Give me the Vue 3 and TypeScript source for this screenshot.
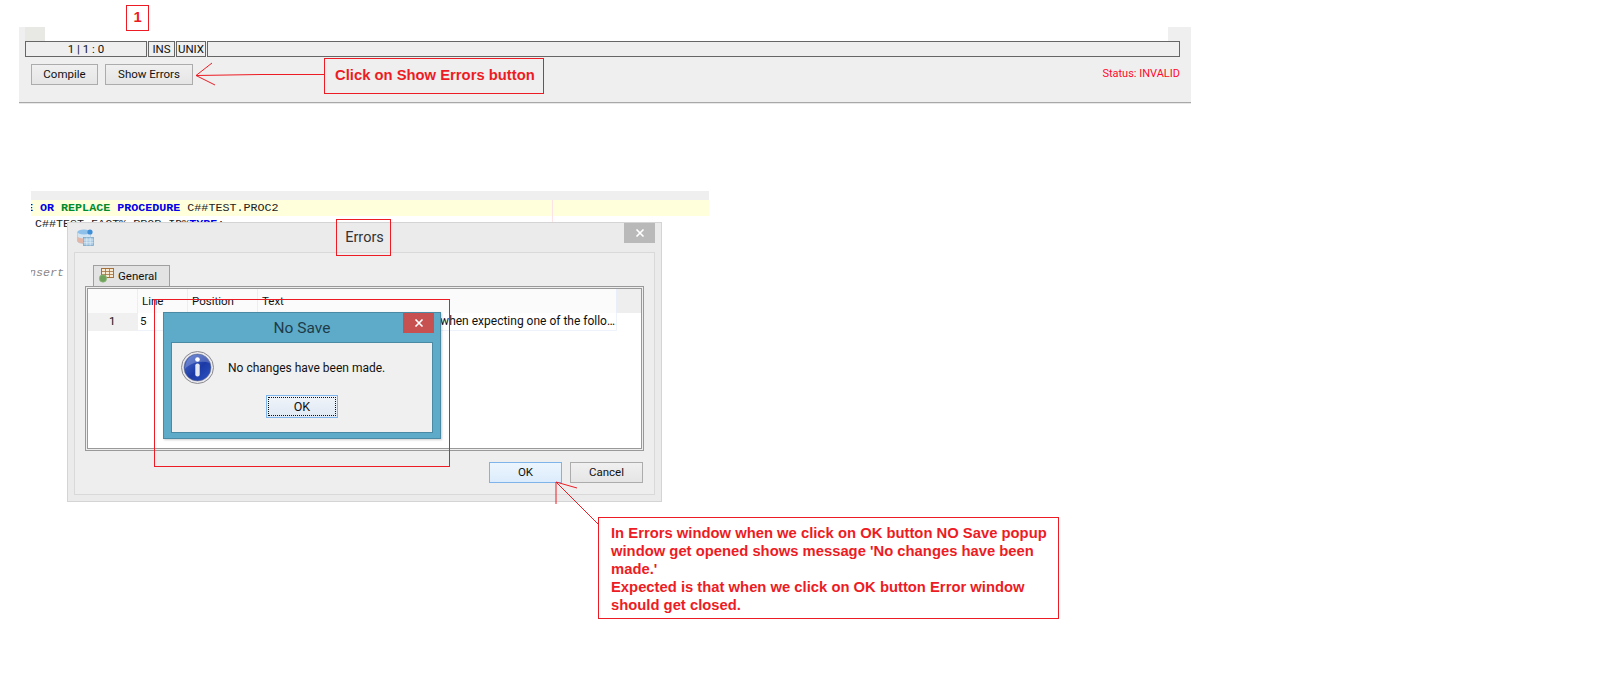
<script setup lang="ts">
const statusCells = [
  { label: '1 | 1 : 0', width: 122 },
  { label: 'INS', width: 27 },
  { label: 'UNIX', width: 30 }
]

const columns = [
  { label: '', width: 50 },
  { label: 'Line', width: 50 },
  { label: 'Position', width: 70 },
  { label: 'Text', width: 359 }
]

const calloutLines = [
  'In Errors window when we click on OK button NO Save popup',
  "window get opened shows message 'No changes have been",
  "made.'",
  'Expected is that when we click on OK button Error window',
  'should get closed.'
]
</script>

<template>
  <div class="page">
    <!-- top editor footer -->
    <section class="panel">
      <div class="panel-top">
        <span class="notch"></span>
        <span class="blank"></span>
      </div>
      <div class="status-row">
        <span
          v-for="cell in statusCells"
          :key="cell.label"
          class="status-cell"
          :style="{ width: cell.width + 'px' }"
        >{{ cell.label }}</span>
        <span class="status-cell grow"></span>
      </div>
      <div class="action-row">
        <button class="btn compile">Compile</button>
        <button class="btn show-errors">Show Errors</button>
        <span class="status-text">Status: INVALID</span>
      </div>
    </section>

    <!-- code behind the dialog -->
    <section class="editor">
      <div class="gutter"></div>
      <div class="code-line current">
        <span class="kw clip">E</span> <span class="kw">OR</span> <span class="kw2">REPLACE</span> <span class="kw">PROCEDURE</span> C##TEST.PROC2
        <i class="margin-line"></i>
      </div>
      <div class="code-line second">C##TEST.FACT%.PROP_ID%<span class="kw">TYPE</span>;</div>
      <div class="code-line comment">nsert</div>
    </section>

    <!-- Errors dialog -->
    <section class="errors">
      <header class="errors-head">
        <svg class="db-icon" width="17" height="17" viewBox="0 0 17 17">
          <path d="M.5 3v9c0 1.400 3 2.500 6.500 2.500s6.500-1.100 6.500-2.500V3z" fill="#d3e4f2" stroke="#a9c4dc" stroke-width=".6" />
          <ellipse cx="7" cy="3" rx="6.500" ry="2.500" fill="#8fc0ea" />
          <path d="M.5 7c0 1.400 3 2.500 6.500 2.500v5c-3.500 0-6.500-1.100-6.500-2.500z" fill="#e8a488" opacity=".7" />
          <circle cx="13" cy="3" r="2.600" fill="#3f8fd8" />
          <rect x="6.500" y="8.500" width="10" height="8" fill="#a9cbe4" stroke="#7da7c7" stroke-width=".8" />
          <path d="M6.500 11h10M6.500 13.700h10M9.800 8.500v8M13.200 8.500v8" stroke="#e2eff8" stroke-width=".7" />
        </svg>
        <span class="errors-title">Errors</span>
        <span class="close grey">
          <svg width="10" height="8" viewBox="0 0 10 8"><path d="M1.500.5l7 7M8.500.5l-7 7" stroke="#fff" stroke-width="1.600" /></svg>
        </span>
      </header>
      <div class="errors-body">
        <div class="tab">
          <svg width="15" height="15" viewBox="0 0 15 15">
            <rect x="2.500" y=".5" width="12" height="9" fill="#f6ead2" stroke="#a5703c" />
            <path d="M2.500 3.500h12M2.500 6.500h12M6.500.5v9M10.500.5v9" stroke="#a5703c" stroke-width=".8" />
            <circle cx="4" cy="10.500" r="3.700" fill="#6fa35c" stroke="#8fbb7e" stroke-width=".7" />
          </svg>
          General
        </div>
        <div class="frame">
          <div class="grid">
            <div class="head">
              <span
                v-for="col in columns"
                :key="col.label"
                class="head-cell"
                :style="{ width: col.width + 'px' }"
              >{{ col.label }}</span>
            </div>
            <div class="row">
              <span class="row-no">1</span>
              <span class="cell line-cell">5</span>
              <span class="cell pos-cell"></span>
              <span class="cell text-cell">/" when expecting one of the follo…</span>
            </div>
          </div>
        </div>
        <div class="errors-foot">
          <button class="btn ok">OK</button>
          <button class="btn cancel">Cancel</button>
        </div>
      </div>
    </section>

    <!-- No Save popup -->
    <section class="nosave">
      <header class="nosave-head">
        <span>No Save</span>
        <span class="close red">
          <svg width="10" height="8" viewBox="0 0 10 8"><path d="M1.500.5l7 7M8.500.5l-7 7" stroke="#fff" stroke-width="1.600" /></svg>
        </span>
      </header>
      <div class="nosave-body">
        <div class="msg">
          <svg width="33" height="33" viewBox="0 0 33 33">
            <defs>
              <linearGradient id="infoFill" x1="0" y1="0" x2="1" y2="1">
                <stop offset="0" stop-color="#4c6fd0" />
                <stop offset=".55" stop-color="#1c3aa6" />
                <stop offset="1" stop-color="#2b55c4" />
              </linearGradient>
            </defs>
            <circle cx="16.500" cy="16.500" r="16" fill="#e8e8ee" stroke="#8a8a90" />
            <circle cx="16.500" cy="16.500" r="13.500" fill="url(#infoFill)" stroke="#6d7488" stroke-width=".6" />
            <path d="M4 18C9 12 20 9 29 12 27 6 22 3.500 16.500 3.500 9.500 3.500 4 9.500 4 18z" fill="#fff" opacity=".22" />
            <circle cx="16.500" cy="8.500" r="2.300" fill="#fff" />
            <rect x="14.300" y="12.500" width="4.400" height="13" rx="2" fill="#e4e8f2" />
          </svg>
          <span>No changes have been made.</span>
        </div>
        <button class="btn popup-ok"><span>OK</span></button>
      </div>
    </section>

    <!-- red annotations -->
    <div class="note num">1</div>
    <div class="note click-note">Click on Show Errors button</div>
    <div class="note errors-note"></div>
    <div class="note popup-note"></div>
    <div class="note callout">
      <div v-for="line in calloutLines" :key="line">{{ line }}</div>
    </div>
    <svg class="arrows" width="1602" height="695" viewBox="0 0 1602 695">
      <g fill="none" stroke="#ed1c24" stroke-width="1">
        <path d="M324 74.500H261L196 75.500" />
        <path d="M196 75.500L212 63M196 75.500L215 85" />
        <path d="M556 482V504M556 482L577 488M556 482L599 525" />
      </g>
    </svg>
  </div>
</template>

<style scoped>
.page {
  position: relative;
  width: 1602px;
  height: 695px;
  overflow: hidden;
  background: #fff;
  font-family: Roboto, "Noto Sans", sans-serif;
  font-size: 11.5px;
  color: #111;
}

.panel {
  width: 1172px;
  height: 75px;
  margin: 27px 0 0 19px;
  background: #efefef;
  border-bottom: 1px solid #a8a8a8;
  box-shadow: 0 1px 0 #e8e8e8;
  box-sizing: content-box;
}

.panel-top {
  display: flex;
  height: 14px;
  padding-left: 6px;
}

.notch {
  width: 20px;
  background: #e8e8e4;
}

.blank {
  width: 1123px;
  background: #fff;
}

.status-row {
  display: flex;
  gap: 1px;
  height: 16px;
  margin-left: 6px;
  width: 1155px;
}

.status-cell {
  box-sizing: border-box;
  display: flex;
  align-items: center;
  justify-content: center;
  border: 1px solid #666;
}

.grow {
  flex: 1;
}

.action-row {
  display: flex;
  align-items: center;
  height: 21px;
  margin-top: 7px;
  padding: 0 11px 0 12px;
}

.btn {
  box-sizing: border-box;
  padding: 0 0 1px;
  height: 21px;
  border: 1px solid #acacac;
  background: linear-gradient(#f0f0f0, #e5e5e5);
  font: inherit;
  color: #111;
}

.compile {
  width: 67px;
}

.show-errors {
  width: 88px;
  margin-left: 7px;
}

.status-text {
  margin-left: auto;
  padding-bottom: 2px;
  font-size: 11px;
  color: #ff0a2a;
}

.editor {
  width: 678px;
  margin: 88px 0 0 31px;
  overflow: hidden;
  font-family: "Liberation Mono", monospace;
  font-size: 11.7px;
  color: #222;
}

.gutter {
  height: 9px;
  background: #efefef;
}

.code-line {
  height: 16px;
  line-height: 16px;
  white-space: pre;
}

.current {
  position: relative;
  background: #ffffdc;
}

.margin-line {
  position: absolute;
  left: 521px;
  top: 0;
  width: 1px;
  height: 22px;
  background: #fde3e6;
}

.kw {
  color: #0000e6;
  font-weight: 700;
}

.kw2 {
  color: #008a2e;
  font-weight: 700;
}

.clip {
  margin-left: -5px;
}

.second {
  padding-left: 4px;
}

.comment {
  margin-top: 33px;
  margin-left: -2px;
  font-style: italic;
  color: #888;
}

.errors {
  position: absolute;
  left: 67px;
  top: 222px;
  box-sizing: border-box;
  width: 595px;
  height: 280px;
  display: flex;
  flex-direction: column;
  background: #ebebeb;
  border: 1px solid #d4d4d4;
}

.errors-head {
  position: relative;
  height: 29px;
  flex: none;
  display: flex;
  align-items: center;
  justify-content: center;
}

.db-icon {
  position: absolute;
  left: 9px;
  top: 6px;
}

.errors-title {
  font-size: 14.5px;
  color: #333;
}

.close {
  position: absolute;
  top: 0;
  right: 6px;
  display: flex;
  align-items: center;
  justify-content: center;
  width: 31px;
  height: 20px;
}

.grey {
  background: #b9b9b9;
}

.red {
  background: #c75050;
}

.errors-body {
  flex: 1;
  margin: 0 6px 6px;
  padding: 12px 10px 0;
  background: #eee;
  border: 1px solid #d9d9d9;
  display: flex;
  flex-direction: column;
  align-items: flex-start;
}

.tab {
  box-sizing: border-box;
  display: flex;
  align-items: center;
  gap: 4px;
  width: 77px;
  height: 21px;
  margin-left: 8px;
  padding: 0 0 1px 5px;
  background: #e3e3e3;
  border: 1px solid #a0a0a0;
  border-bottom: 0;
  font-size: 11.5px;
}

.frame {
  box-sizing: border-box;
  width: 559px;
  height: 165px;
  padding: 1px;
  background: #eee;
  border: 1px solid #999;
}

.grid {
  box-sizing: border-box;
  height: 100%;
  background: #fff;
  border: 1px solid #999;
}

.head {
  display: flex;
  height: 24px;
  background: linear-gradient(to right, #fbfbfc 528px, #eee 528px);
}

.head-cell {
  box-sizing: border-box;
  padding: 5px 0 0 4px;
  border-right: 1px solid #e8eefa;
}

.row {
  display: flex;
  height: 18px;
  line-height: 16px;
}

.row-no {
  width: 50px;
  flex: none;
  padding-left: 21px;
  box-sizing: border-box;
  background: #f0f0f0;
}

.cell {
  box-sizing: border-box;
  padding-left: 2px;
  border-right: 1px solid #eef2fa;
  border-bottom: 1px solid #eef2fa;
}

.line-cell {
  width: 50px;
}

.pos-cell {
  width: 70px;
}

.text-cell {
  width: 359px;
  padding-right: 1px;
  text-align: right;
  white-space: nowrap;
  overflow: hidden;
  font-size: 12px;
}

.errors-foot {
  align-self: flex-end;
  display: flex;
  gap: 8px;
  margin-top: 11px;
  margin-right: 1px;
}

.ok {
  width: 73px;
  background: linear-gradient(#ecf5fd, #dcecfc);
  border-color: #7eb4ea;
}

.cancel {
  width: 73px;
}

.nosave {
  position: absolute;
  left: 163px;
  top: 312px;
  box-sizing: border-box;
  width: 278px;
  height: 127px;
  display: flex;
  flex-direction: column;
  background: #5dabc8;
  border: 1px solid #4a8aa5;
  box-shadow: 1px 1px 2px rgba(0, 0, 0, 0.2);
}

.nosave-head {
  position: relative;
  height: 29px;
  flex: none;
  display: flex;
  align-items: center;
  justify-content: center;
  font-size: 15.5px;
  color: #1f3b4a;
}

.nosave-body {
  flex: 1;
  margin: 0 7px 5px;
  background: #f0f0f0;
  border: 1px solid #4a8aa5;
  display: flex;
  flex-direction: column;
  align-items: center;
}

.msg {
  align-self: stretch;
  display: flex;
  align-items: center;
  gap: 14px;
  height: 33px;
  margin-top: 8px;
  padding-left: 9px;
  font-size: 12px;
}

.popup-ok {
  width: 72px;
  height: 23px;
  margin-top: 11px;
  padding: 1px;
  background: linear-gradient(#f0f4f9, #dfe8f3);
  border-color: #7eb4ea;
  font-size: 12.5px;
}

.popup-ok span {
  display: block;
  height: 100%;
  box-sizing: border-box;
  border: 1px dotted #111;
  line-height: 17px;
}

.note {
  position: absolute;
  box-sizing: border-box;
  border: 1px solid #ed1c24;
  color: #ed1c24;
  font-family: "Liberation Sans", Arial, sans-serif;
  font-weight: 700;
  font-size: 14.8px;
}

.num {
  left: 126px;
  top: 5px;
  width: 23px;
  height: 26px;
  text-align: center;
  line-height: 22px;
}

.click-note {
  left: 324px;
  top: 58px;
  width: 220px;
  height: 36px;
  display: flex;
  align-items: center;
  padding: 0 0 2px 10px;
}

.errors-note {
  left: 336px;
  top: 219px;
  width: 55px;
  height: 37px;
}

.popup-note {
  left: 154px;
  top: 299px;
  width: 296px;
  height: 168px;
}

.callout {
  left: 598px;
  top: 517px;
  width: 461px;
  height: 102px;
  padding: 6px 0 0 12px;
  line-height: 18px;
  background: #fff;
}

.arrows {
  position: absolute;
  left: 0;
  top: 0;
  pointer-events: none;
}
</style>
